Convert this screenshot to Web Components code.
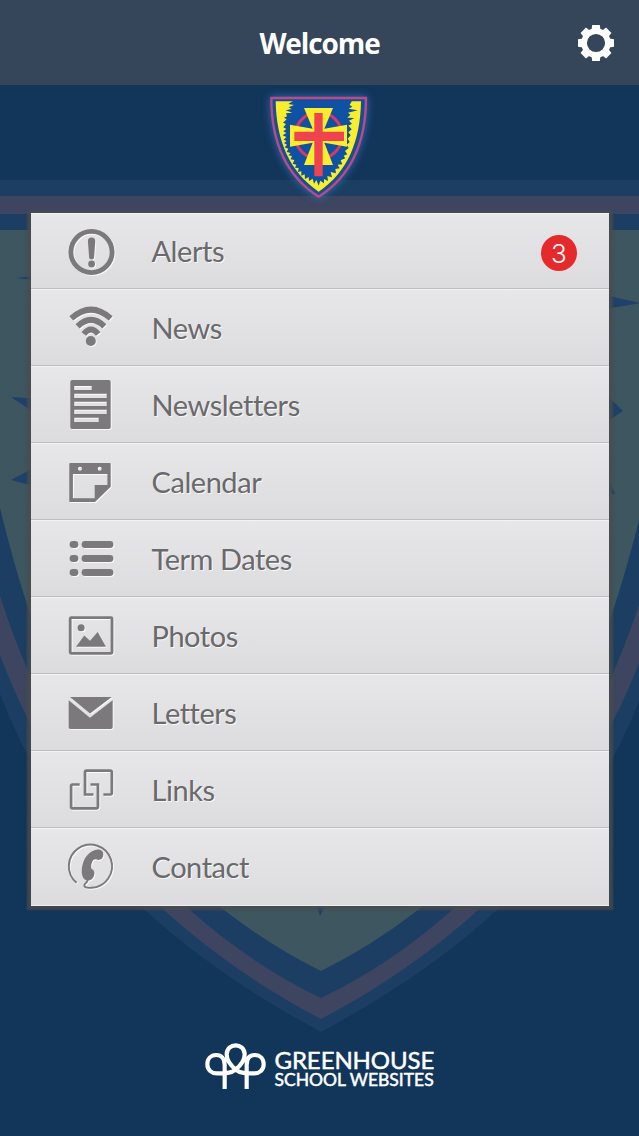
<!DOCTYPE html>
<html lang="en">
<head>
<meta charset="utf-8">
<title>Welcome</title>
<style>
  body {
    margin: 0;
    background: #12355a;
    font-family: Lato, "Liberation Sans", sans-serif;
  }
</style>
</head>
<body>
<school-app>
  <app-header slot="header">Welcome</app-header>
  <school-crest slot="crest"></school-crest>
  <menu-list>
    <menu-item icon="alerts" count="3">Alerts</menu-item>
    <menu-item icon="news">News</menu-item>
    <menu-item icon="newsletters">Newsletters</menu-item>
    <menu-item icon="calendar">Calendar</menu-item>
    <menu-item icon="dates">Term Dates</menu-item>
    <menu-item icon="photos">Photos</menu-item>
    <menu-item icon="letters">Letters</menu-item>
    <menu-item icon="links">Links</menu-item>
    <menu-item icon="contact">Contact</menu-item>
  </menu-list>
  <brand-footer slot="footer">
    <span slot="name">GREENHOUSE</span>
    <span slot="tagline">SCHOOL WEBSITES</span>
  </brand-footer>
</school-app>

<script>
const icons = {
  alerts: `
    <circle cx="24.5" cy="25" r="20.6" fill="none" stroke="currentColor" stroke-width="4.8"/>
    <path d="M20.9 14.2a3.7 3.7 0 0 1 7.4 0L27.1 30a2.5 2.5 0 0 1-5 0z"/>
    <circle cx="24.6" cy="37" r="3.4"/>`,
  news: `
    <g fill="none" stroke="currentColor" stroke-width="5.8">
      <path d="M4.3 14.4Q24-3.2 43.7 14.4"/>
      <path d="M10.6 22.4Q24 9.400 37.4 22.4"/>
      <path d="M16.8 30Q24 21 31.2 30"/>
    </g>
    <circle cx="23.8" cy="37" r="5"/>`,
  newsletters: `
    <path fill-rule="evenodd" d="M5.3-1h36.4a2 2 0 0 1 2 2v45a2 2 0 0 1-2 2H5.3a2 2 0 0 1-2-2V1a2 2 0 0 1 2-2z
      M7.3 5v4h17.4V5zM7.3 12.8v4.2h32.4v-4.2zM7.3 20.8V25h32.4v-4.2zM7.3 28.8V33h32.4v-4.2zM7.3 36.8V41h24.4v-4.2z"/>`,
  calendar: `
    <path fill-rule="evenodd" d="M3.3 5h39.4a1 1 0 0 1 1 1v22.7L28 44H3.3a1 1 0 0 1-1-1V6a1 1 0 0 1 1-1z
      M5.9 15.9v24.4h21.8V27h12.7V15.9z
      M11 10.7a2 2 0 1 0 4 0a2 2 0 1 0-4 0zM30.7 10.7a2 2 0 1 0 4 0a2 2 0 1 0-4 0z"/>`,
  dates: `
    <rect x="2.6" y="6" width="8.8" height="6.9" rx="3.4"/><rect x="14.6" y="6" width="31.8" height="6.9" rx="3.4"/>
    <rect x="2.6" y="20" width="8.8" height="6.9" rx="3.4"/><rect x="14.6" y="20" width="31.8" height="6.9" rx="3.4"/>
    <rect x="2.6" y="34" width="8.8" height="6.9" rx="3.4"/><rect x="14.6" y="34" width="31.8" height="6.9" rx="3.4"/>`,
  photos: `
    <rect x="3.2" y="5.7" width="41.8" height="35.6" rx="1" fill="none" stroke="currentColor" stroke-width="2.8"/>
    <circle cx="14.1" cy="15.7" r="3.5"/>
    <path d="M9 34.8l8.3-11.2 5.7 5.2L30.7 20 39 34.8z"/>`,
  letters: `
    <path d="M3 8h41.7L23 24.6z"/>
    <path d="M1.7 11.2L23 28.7 45.7 11.2v27a1.8 1.8 0 0 1-1.8 1.8H3.5a1.8 1.8 0 0 1-1.8-1.8z"/>`,
  links: `
    <g fill="none" stroke="currentColor" stroke-width="2.7">
      <path d="M26.5 28.5H18V6a1.4 1.4 0 0 1 1.4-1.4h24a1.4 1.4 0 0 1 1.4 1.4v21.1a1.4 1.4 0 0 1-1.4 1.4h-7"/>
      <path d="M12.7 18.5H5.5a1.4 1.4 0 0 0-1.4 1.4V41a1.4 1.4 0 0 0 1.4 1.4h24A1.4 1.4 0 0 0 30.9 41V18.5h-7.4"/>
    </g>`,
  contact: `
    <path fill="none" stroke="currentColor" stroke-width="1.9" d="M9.6 39.800A21.6 21.6 0 1 1 24.4 44.800C19 45.300 16.200 43.900 17.800 41.200C19 39.500 20.600 39 20.800 36.500"/>
    <path d="M27.5 7.200C31.500 5.600 36.600 6.800 36.300 11.500C36 16.300 32.600 17.600 29.800 16.600C27.800 16 26.400 16.500 25.300 18.700C24 21.300 23.800 24 24.700 26C27.700 27 28 30.300 26.700 33.500C25.100 37.600 20.500 38.500 17.400 36.300C13.800 32.500 14.300 24.500 16.400 18.900C18.400 13.500 22.500 9 27.500 7.200z"/>`
};

class SchoolApp extends HTMLElement {
  constructor() {
    super();

    this.attachShadow({ mode: 'open' });
    this.shadowRoot.innerHTML = `
      <style>
        :host {
          position: relative;
          display: flex;
          flex-direction: column;
          height: 1136px;
          overflow: hidden;
        }

        .backdrop {
          position: absolute;
          inset: 0;
          z-index: -1;
        }

        .crest {
          height: 128px;
          display: flex;
          justify-content: center;
        }

        main {
          margin: 0 30px 0 31px;
        }

        footer {
          flex: 1;
          display: flex;
          justify-content: center;
        }
      </style>
      <svg class='backdrop' width='639' height='1136' viewBox='0 0 639 1136'>
        <g id='half'>
          <path fill='#1b3e62' d='M321 180H-40V570L0 694Q9 718 20 740C50 802 92 860 145 910Q215 975 321 1032z'/>
          <path fill='#3d4560' d='M321 196H-40V520L0 655Q13 690 28 719C62 788 110 856 166 912Q235 974 321 1019z'/>
          <path fill='#1b3e62' d='M321 214H-40V470L0 596Q12 633 26 666C62 758 124 850 190 910Q252 965 321 998z'/>
          <path fill='#3d5660' d='M321 230H-40V350L0 508Q13 562 30 614C68 735 140 840 224 910Q272 947 321 971z'/>
        </g>
        <use href='#half' transform='translate(642) scale(-1 1)'/>
        <path fill='#1d4168' d='M16 278l18-2v4zM11 397l30 2v18zM11 480l30-16v24zM640 303l-40-9v16zM623 411l-20-19v32zM615 494l-16-36v34zM315 900h13l-8 16z'/>
      </svg>
      <slot name='header'></slot>
      <div class='crest'><slot name='crest'></slot></div>
      <main><slot></slot></main>
      <footer><slot name='footer'></slot></footer>
    `;
  }
}

class AppHeader extends HTMLElement {
  constructor() {
    super();

    this.attachShadow({ mode: 'open' });
    this.shadowRoot.innerHTML = `
      <style>
        :host {
          display: grid;
          grid-template-columns: 1fr auto 1fr;
          align-items: center;
          box-sizing: border-box;
          height: 85px;
          padding: 0 24px;
          background: #35455a;
          color: #fff;
        }

        h1 {
          grid-column: 2;
          margin: 0;
          font: bold 28px/1 "Open Sans", "Noto Sans", sans-serif;
          letter-spacing: -1.1px;
        }

        svg {
          justify-self: end;
        }
      </style>
      <h1><slot></slot></h1>
      <svg width='38' height='38' viewBox='-19 -19 38 38'>
        <g fill='#fff'>
          <path id='tooth' d='M-4.5-13L-3.8-18H3.8L4.5-13z'/>
          <use href='#tooth' transform='rotate(45)'/>
          <use href='#tooth' transform='rotate(90)'/>
          <use href='#tooth' transform='rotate(135)'/>
          <use href='#tooth' transform='rotate(180)'/>
          <use href='#tooth' transform='rotate(225)'/>
          <use href='#tooth' transform='rotate(270)'/>
          <use href='#tooth' transform='rotate(315)'/>
        </g>
        <circle r='11.9' fill='none' stroke='#fff' stroke-width='5.6'/>
      </svg>
    `;
  }
}

class SchoolCrest extends HTMLElement {
  constructor() {
    super();

    this.attachShadow({ mode: 'open' });
    this.shadowRoot.innerHTML = `
      <style>
        :host {
          display: block;
          width: 130px;
          height: 125px;
        }

        svg {
          display: block;
          overflow: visible;
          filter: drop-shadow(0 0 4px rgba(55, 115, 185, 0.9));
        }
      </style>
      <svg width='130' height='125' viewBox='0 0 390 375'>
        <path fill='#174f96' stroke='#bd4a86' stroke-width='7' d='M49 39H333C333 170 290 272 191 335C92 272 49 170 49 39z'/>
        <path fill='#f8ee2d' d='M62 49H318C316 165 280 260 191 320C102 260 64 165 62 49z'/>
        <path fill='#0f51a3' d='M115 47L100 57 117 60 101 67 110 72 92 76 112 83 93 85 96 94 87 98 95 103 84 113 93 117
          85 127 94 132 85 139 94 144 83 151 94 156 86 164 95 168 87 174 96 179 89 187 100 191 95 201 107 204 100 211 111 213
          107 223 118 225 113 236 124 239 120 248 131 249 129 261 139 259 139 272 149 268 150 282 161 276 162 288 173 281 177 296
          184 285 191 302 196 287 207 295 207 282 219 288 217 273 231 277 227 261 243 265 241 252 254 250 248 239 262 238 257 226
          271 220 266 212 277 208 270 198 281 189 275 179 284 171 278 161 287 151 280 142 290 133 280 122 291 116 282 107 298 99
          277 98 286 89 279 83 308 76 281 71 292 65 284 60 291 47z'/>
        <circle cx='191' cy='152' r='70' fill='none' stroke='#d63869' stroke-width='9'/>
        <path fill='#f8ee2d' d='M147 69H234L208 131 276 119V185L208 173 234 240H147L173 173 105 185V119L173 131z'/>
        <path fill='#f04350' d='M178 84h25v56h64v28h-64v106h-25V168h-60v-28h60z'/>
      </svg>
    `;
  }
}

class MenuList extends HTMLElement {
  constructor() {
    super();

    this.attachShadow({ mode: 'open' });
    this.shadowRoot.innerHTML = `
      <style>
        :host {
          display: block;
          background: #e3e2e4;
          box-shadow: 0 0 2px 4px rgba(74, 76, 78, 0.8);
          clip-path: inset(-2px -7px -7px -7px);
        }

        ::slotted(:first-child) {
          --row-height: 76px;
        }
      </style>
      <slot></slot>
    `;
  }
}

class MenuItem extends HTMLElement {
  constructor() {
    super();

    const count = this.getAttribute('count');

    this.attachShadow({ mode: 'open' });
    this.shadowRoot.innerHTML = `
      <style>
        :host {
          display: flex;
          align-items: flex-end;
          box-sizing: border-box;
          height: var(--row-height, 77px);
          padding: 0 32px 13px 36px;
          border-top: 1px solid #f3f2f4;
          border-bottom: 1px solid #bdbcbe;
          background: linear-gradient(#e7e6e8, #dcdbdd);
          color: #6a696c;
        }

        :host(:last-child) {
          height: 78px;
          padding-bottom: 14px;
          border-bottom-color: #efeef0;
        }

        svg {
          flex: none;
          overflow: visible;
          fill: currentColor;
          color: #7b797c;
          filter: drop-shadow(1px 1px 0 rgba(255, 255, 255, 0.8));
        }

        .label {
          flex: 1;
          margin-left: 36.5px;
          font-size: 29px;
          line-height: 48px;
          letter-spacing: -0.45px;
          font-variant-ligatures: none;
          text-shadow: 1px 1px 0 rgba(255, 255, 255, 0.8);
        }

        .badge {
          width: 36px;
          height: 36px;
          margin-bottom: 4px;
          border-radius: 50%;
          background: #e52a2c;
          color: #fff;
          font: 300 26px/37px Inter, "Liberation Sans", sans-serif;
          text-align: center;
        }
      </style>
      <svg width='48' height='48' viewBox='0 0 48 48'>${icons[this.getAttribute('icon')]}</svg>
      <span class='label'><slot></slot></span>
      ${count ? `<span class='badge'>${count}</span>` : ''}
    `;
  }
}

class BrandFooter extends HTMLElement {
  constructor() {
    super();

    this.attachShadow({ mode: 'open' });
    this.shadowRoot.innerHTML = `
      <style>
        :host {
          display: flex;
          gap: 9px;
          padding-top: 136px;
          color: #fff;
          -webkit-text-stroke: 0.5px #fff;
        }

        .text {
          display: flex;
          flex-direction: column;
          width: 160px;
          padding-top: 8px;
          white-space: nowrap;
        }

        .name {
          font: 24px/20px Lato, sans-serif;
          letter-spacing: -0.1px;
        }

        .tagline {
          font: 17.5px/20px Lato, sans-serif;
        }
      </style>
      <svg width='61' height='48' viewBox='45 39 183 144'>
        <path fill='none' stroke='#fff' stroke-width='12.5' d='M104 180V108C104 88 94 78 79 78C62 78 52 90 52 106
          C52 123 65 133 80 133C106 133 124 133 137 122C150 111 164 96 164 76C164 40 110 40 110 76
          C110 96 124 111 137 122C150 133 168 133 193 133C208 133 221 123 221 106C221 90 211 78 194 78C179 78 170 88 170 108V180'/>
      </svg>
      <div class='text'>
        <span class='name'><slot name='name'></slot></span>
        <span class='tagline'><slot name='tagline'></slot></span>
      </div>
    `;
  }
}

customElements.define('school-app', SchoolApp);
customElements.define('app-header', AppHeader);
customElements.define('school-crest', SchoolCrest);
customElements.define('menu-list', MenuList);
customElements.define('menu-item', MenuItem);
customElements.define('brand-footer', BrandFooter);
</script>
</body>
</html>
